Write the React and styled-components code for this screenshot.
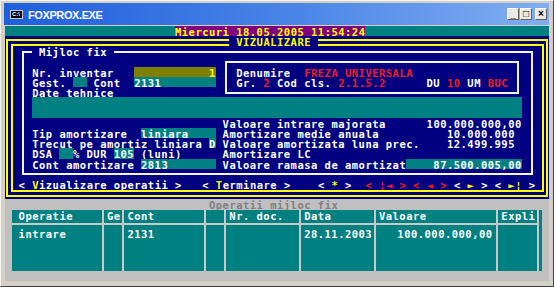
import React from "react";
import styled, { createGlobalStyle } from "styled-components";

// one text-mode cell of the FoxPro screen
const CW = 6.8;
const RH = 10.2;
const cols = n => `${n * CW}px`;
const rows = n => `${n * RH}px`;

const NAVY = "#000080";
const TEAL = "#008080";
const YELLOW = "#ffff00";
const RED = "#f01c1c";

const GlobalStyle = createGlobalStyle`
  html, body {
    margin: 0;
    padding: 0;
    background: #d4d0c8;
  }
  body {
    width: 554px;
    height: 287px;
    overflow: hidden;
  }
`;

const Window = styled.div`
  width: 554px;
  height: 287px;
  box-sizing: border-box;
  background: #d4d0c8;
  border: 1px solid;
  border-color: #f4f4f0 #404040 #404040 #f4f4f0;
  padding: 2px 4px 0 3px;
  display: flex;
  flex-direction: column;
`;

const TitleBar = styled.div`
  height: 22px;
  flex: none;
  display: flex;
  align-items: center;
  padding: 0 2px 0 6px;
  background: linear-gradient(to right, #1e5fdc, #4c86e8 55%, #80aef0);
  font-family: "Liberation Sans", Arial, sans-serif;
`;

const AppIcon = styled.span`
  width: 13px;
  height: 9px;
  background: #000;
  border: 1px solid #c8c8c8;
  box-sizing: border-box;
  color: #fff;
  font: bold 6px "Liberation Sans", sans-serif;
  line-height: 7px;
  padding-left: 1px;
  margin-right: 5px;
`;

const Title = styled.span`
  flex: 1;
  color: #fff;
  font-size: 11px;
  font-weight: bold;
  letter-spacing: -0.4px;
  padding-top: 1px;
`;

const CaptionButton = styled.span`
  width: 12px;
  height: 12px;
  margin-left: ${p => p.gap || 1}px;
  box-sizing: border-box;
  background: #ece9e0;
  border: 1px solid;
  border-color: #fff #606060 #606060 #fff;
  display: flex;
  align-items: center;
  justify-content: center;
  color: #000;
  font: bold 10px "Liberation Sans", sans-serif;
  line-height: 1;
`;

const Console = styled.div`
  width: ${cols(80)};
  height: ${rows(25)};
  margin: 1px 0 0 1px;
  flex: none;
  display: flex;
  flex-direction: column;
  font-family: "DejaVu Sans Mono", "Liberation Mono", monospace;
  font-weight: bold;
  font-size: 10.5px;
  letter-spacing: 0.48px;
  color: #fff;
  white-space: pre;
`;

const Row = styled.div`
  display: flex;
  flex: none;
  height: ${rows(1)};
  line-height: 12px;
  padding-left: ${p => cols(p.indent || 0)};
`;

const StatusRow = styled(Row)`
  background: ${TEAL};
`;

const Clock = styled.span`
  background: #800080;
  color: ${YELLOW};
`;

const MainPanel = styled.div`
  position: relative;
  flex: none;
  height: ${rows(16)};
  background: ${NAVY};
  &::before,
  &::after {
    content: "";
    position: absolute;
    border: 2px solid ${YELLOW};
  }
  &::before {
    top: 3px;
    left: 1px;
    right: 1px;
    bottom: 2.4px;
  }
  &::after {
    top: 7.5px;
    left: 5.5px;
    right: 5.5px;
    bottom: 6.9px;
  }
`;

const Legend = styled.span`
  position: relative;
  z-index: 1;
  background: ${NAVY};
  color: ${p => p.color || "#fff"};
`;

const FixFrame = styled.div`
  position: relative;
  margin-left: ${cols(2)};
  width: ${cols(76)};
  height: ${rows(13)};
  &::before {
    content: "";
    position: absolute;
    top: 4.5px;
    bottom: ${RH - 6.5}px;
    left: 3px;
    right: 2.5px;
    border: 2px solid #f4f4f4;
  }
`;

const FrameBody = styled.div`
  padding-left: ${cols(2)};
`;

const Split = styled.div`
  display: flex;
  height: ${p => rows(p.lines)};
`;

const Column = styled.div`
  width: ${p => cols(p.w)};
  flex: none;
  display: flex;
  flex-direction: column;
`;

const Label = styled.span`
  flex: none;
  width: ${p => (p.w ? cols(p.w) : "auto")};
  color: ${p => p.color || "#fff"};
`;

const Input = styled.span`
  flex: none;
  width: ${p => cols(p.w)};
  background: ${p => p.bg || TEAL};
  color: ${p => p.color || "#fff"};
  text-align: ${p => (p.right ? "right" : "left")};
`;

const Amount = styled.span`
  flex: none;
  width: ${p => cols(p.w)};
  text-align: right;
`;

const NameBox = styled.div`
  position: relative;
  width: ${cols(44)};
  height: ${rows(4)};
  padding: ${rows(1)} 0 0 ${cols(2)};
  box-sizing: border-box;
  &::before {
    content: "";
    position: absolute;
    top: 4.5px;
    bottom: ${RH - 6.5}px;
    left: 2.5px;
    right: 2.5px;
    border: 2px solid #f4f4f4;
  }
`;

const Memo = styled.div`
  width: ${cols(72)};
  height: ${rows(2)};
  background: ${TEAL};
`;

const Button = styled.span`
  flex: none;
  margin-left: ${p => cols(p.gap || 0)};
  color: ${p => (p.disabled ? RED : "#fff")};
`;

const Hot = styled.span`
  color: ${YELLOW};
`;

const OpsArea = styled.div`
  flex: none;
  height: ${rows(8)};
  background: #c0c0c0;
  display: flex;
  flex-direction: column;
`;

const Browse = styled.div`
  display: flex;
  margin-left: ${cols(1)};
  width: ${cols(78)};
  height: ${rows(6)};
  background: ${TEAL};
`;

const BrowseCol = styled.div`
  width: ${p => cols(p.w)};
  flex: none;
  box-sizing: border-box;
  border-right: ${p => (p.last ? "none" : "2px solid #c8c8c8")};
  display: flex;
  flex-direction: column;
`;

const BrowseHead = styled.div`
  height: ${rows(1.5)};
  flex: none;
  box-sizing: border-box;
  border-bottom: 2px solid #c8c8c8;
  line-height: 12px;
  padding-left: ${p => cols(p.pad)};
`;

const BrowseCell = styled.div`
  padding-top: ${RH / 2 - 2}px;
  line-height: 12px;
  height: ${rows(1)};
  padding-left: ${p => cols(p.pad)};
  padding-right: ${p => cols(p.padRight || 0)};
  text-align: ${p => (p.right ? "right" : "left")};
`;

const browseColumns = [
  { title: "Operatie", w: 13.5, pad: 1, value: "intrare" },
  { title: "Ge", w: 3, pad: 0.5, value: "" },
  { title: "Cont", w: 12, pad: 0.5, value: "2131" },
  { title: "", w: 3, pad: 0.5, value: "" },
  { title: "Nr. doc.", w: 11, pad: 0.5, value: "" },
  { title: "Data", w: 11, pad: 0.5, value: "28.11.2003" },
  { title: "Valoare", w: 18, pad: 0.5, value: "100.000.000,00", right: true },
  { title: "Expli", w: 6, pad: 0.5, value: "" },
];

const App = () => (
  <Window>
    <GlobalStyle />
    <TitleBar>
      <AppIcon>C:\</AppIcon>
      <Title>FOXPROX.EXE</Title>
      <CaptionButton>_</CaptionButton>
      <CaptionButton>□</CaptionButton>
      <CaptionButton gap={3}>×</CaptionButton>
    </TitleBar>
    <Console>
      <StatusRow indent={25}>
        <Clock>Miercuri 18.05.2005 11:54:24</Clock>
      </StatusRow>
      <MainPanel>
        <Row indent={33}>
          <Legend color={YELLOW}> VIZUALIZARE </Legend>
        </Row>
        <FixFrame>
          <Row indent={2}>
            <Legend> Mijloc fix </Legend>
          </Row>
          <FrameBody>
            <Split lines={4}>
              <Column w={28}>
                <Row />
                <Row>
                  <Label w={15}>Nr. inventar</Label>
                  <Input w={12} bg="#808000" color={YELLOW} right>1</Input>
                </Row>
                <Row>
                  <Label w={6}>Gest.</Label>
                  <Input w={2} />
                  <Label w={7}> Cont</Label>
                  <Input w={12}>2131</Input>
                </Row>
                <Row>
                  <Label>Date tehnice</Label>
                </Row>
              </Column>
              <NameBox>
                <Row>
                  <Label w={10}>Denumire</Label>
                  <Label color={RED}>FREZA UNIVERSALA</Label>
                </Row>
                <Row>
                  <Label w={4}>Gr.</Label>
                  <Label w={1} color={RED}>2</Label>
                  <Label w={10}> Cod cls.</Label>
                  <Label w={13} color={RED}>2.1.5.2</Label>
                  <Label w={3}>DU</Label>
                  <Label w={2} color={RED}>10</Label>
                  <Label w={4}> UM</Label>
                  <Label color={RED}>BUC</Label>
                </Row>
              </NameBox>
            </Split>
            <Memo />
            <Split lines={5}>
              <Column w={28}>
                <Row />
                <Row>
                  <Label w={16}>Tip amortizare</Label>
                  <Input w={11}>liniara</Input>
                </Row>
                <Row>
                  <Label w={26}>Trecut pe amortiz liniara</Label>
                  <Input w={1}>D</Input>
                </Row>
                <Row>
                  <Label w={4}>DSA</Label>
                  <Input w={2} />
                  <Label w={6}>% DUR</Label>
                  <Input w={3}>105</Input>
                  <Label> (luni)</Label>
                </Row>
                <Row>
                  <Label w={16}>Cont amortizare</Label>
                  <Input w={11}>2813</Input>
                </Row>
              </Column>
              <Column w={44}>
                <Row>
                  <Label w={30}>Valoare intrare majorata</Label>
                  <Amount w={14}>100.000.000,00</Amount>
                </Row>
                <Row>
                  <Label w={30}>Amortizare medie anuala</Label>
                  <Amount w={14}>10.000.000 </Amount>
                </Row>
                <Row>
                  <Label w={30}>Valoare amortizata luna prec.</Label>
                  <Amount w={14}>12.499.995 </Amount>
                </Row>
                <Row>
                  <Label w={30}>Amortizare LC</Label>
                </Row>
                <Row>
                  <Label w={27}>Valoare ramasa de amortizat</Label>
                  <Input w={17} right>87.500.005,00</Input>
                </Row>
              </Column>
            </Split>
          </FrameBody>
        </FixFrame>
        <Row indent={2}>
          <Button>{"< "}<Hot>V</Hot>{"izualizare operatii >"}</Button>
          <Button gap={3}>{"< "}<Hot>T</Hot>{"erminare >"}</Button>
          <Button gap={4}>{"< "}<Hot>*</Hot>{" >"}</Button>
          <Button gap={2} disabled>{"< ¦◄ >"}</Button>
          <Button gap={1} disabled>{"< ◄ >"}</Button>
          <Button gap={1}>{"< "}<Hot>►</Hot>{" >"}</Button>
          <Button gap={1}>{"< "}<Hot>►¦</Hot>{" >"}</Button>
        </Row>
      </MainPanel>
      <OpsArea>
        <Row indent={30}>
          <Label color="#808080">Operatii mijloc fix</Label>
        </Row>
        <Browse>
          {browseColumns.map(c => (
            <BrowseCol key={c.title + c.w} w={c.w}>
              <BrowseHead pad={c.pad}>{c.title}</BrowseHead>
              <BrowseCell pad={c.pad} padRight={c.right ? 0.5 : 0} right={c.right}>
                {c.value}
              </BrowseCell>
            </BrowseCol>
          ))}
          <BrowseCol w={0.5} last />
        </Browse>
      </OpsArea>
    </Console>
  </Window>
);

export default App;
